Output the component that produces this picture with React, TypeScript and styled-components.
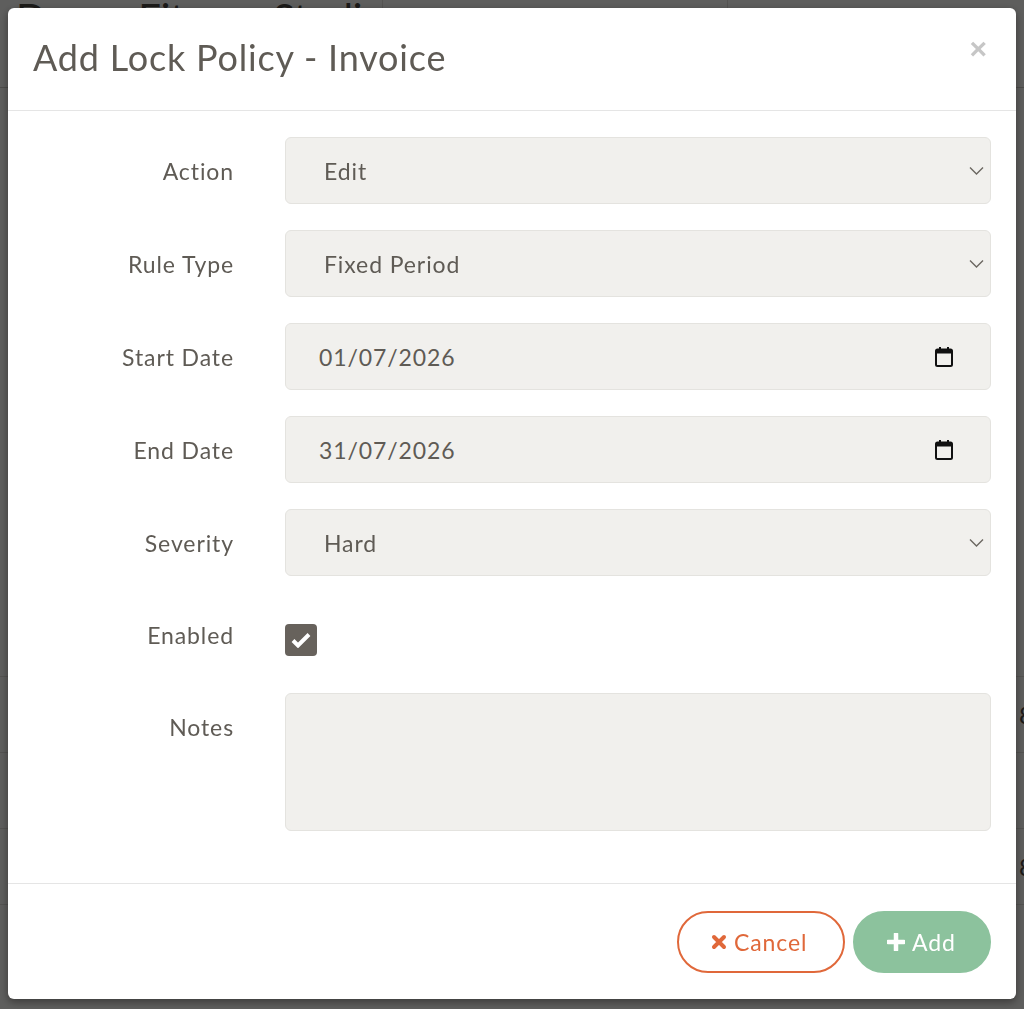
import React from "react"
import styled, { createGlobalStyle } from "styled-components"

const GlobalStyle = createGlobalStyle`
    * {
        box-sizing: border-box;
    }
    html, body {
        margin: 0;
        padding: 0;
        height: 100%;
        font-family: Lato, "Open Sans", sans-serif;
    }
`

const Page = styled.div`
    width: 100%;
    min-height: 100vh;
    background: #f7f6f3;
    overflow: hidden;
`

const TopBar = styled.div`
    height: 88px;
    display: flex;
    border-bottom: 1px solid #c9c7c2;
`

const PageTitle = styled.h1`
    margin: -6px 0 0 0;
    padding: 0 16px;
    width: 383px;
    white-space: nowrap;
    font-size: 40px;
    font-weight: 400;
    color: #4a4742;
    border-right: 1px solid #dcdad5;
`

const TopCell = styled.div`
    width: 345px;
    border-right: 1px solid #dcdad5;
`

const Table = styled.div`
    padding-top: 588px;
`

const TableRow = styled.div`
    height: 76px;
    border-top: 1px solid #dcdad5;
    display: flex;
    justify-content: flex-end;
    align-items: center;
    font-size: 24px;
    color: #4a4742;
    margin-right: -9px;
`

const Backdrop = styled.div`
    position: fixed;
    inset: 0;
    background: rgba(0, 0, 0, 0.62);
    padding: 8px;
`

const Modal = styled.div`
    background: #fff;
    border-radius: 6px;
    height: 991px;
    display: flex;
    flex-direction: column;
    box-shadow: 0 3px 9px rgba(0, 0, 0, 0.4);
`

const Header = styled.div`
    flex-shrink: 0;
    height: 103px;
    display: flex;
    align-items: center;
    justify-content: space-between;
    padding: 0 29px 0 25px;
    border-bottom: 1px solid #e5e5e5;
`

const Title = styled.h4`
    margin: 0;
    margin-top: -4px;
    font-size: 36px;
    font-weight: 400;
    letter-spacing: 0.8px;
    color: #5f5b55;
`

const Close = styled.button`
    border: 0;
    background: none;
    padding: 0;
    font-family: "Liberation Sans", Arial, sans-serif;
    font-size: 30px;
    font-weight: 700;
    line-height: 1;
    color: #c6c6c6;
    margin-top: -20px;
    cursor: pointer;
`

const Body = styled.div`
    flex: 1;
    padding: 26px 25px;
    border-bottom: 1px solid #e5e5e5;
`

const Row = styled.div`
    display: grid;
    grid-template-columns: 201px 1fr;
    column-gap: 51px;
    margin-bottom: 26px;
`

const Label = styled.label<{ $height?: number }>`
    text-align: right;
    padding-top: 2px;
    font-size: 23px;
    letter-spacing: 0.9px;
    line-height: ${p => (p.$height ?? 67) - 2}px;
    color: #5f5b55;
    align-self: start;
`

const Field = styled.div`
    position: relative;
`

const Control = styled.div<{ $inset?: number }>`
    height: 67px;
    display: flex;
    align-items: center;
    padding-left: ${p => p.$inset ?? 38}px;
    background: #f1f0ed;
    border: 1px solid #e4e3df;
    border-radius: 6px;
    font-size: 23px;
    letter-spacing: 0.9px;
    color: #5f5b55;
`

const Select = styled.select`
    appearance: none;
    width: 100%;
    height: 67px;
    padding: 0 0 0 38px;
    background: #f1f0ed;
    border: 1px solid #e4e3df;
    border-radius: 6px;
    font-family: inherit;
    font-size: 23px;
    letter-spacing: 0.9px;
    color: #5f5b55;
    outline: none;
`

const IconSlot = styled.span<{ $right: number }>`
    position: absolute;
    top: 50%;
    right: ${p => p.$right}px;
    transform: translateY(-50%);
    display: flex;
    pointer-events: none;
`

const Check = styled.span`
    margin-top: 22px;
    width: 32px;
    height: 32px;
    border-radius: 4px;
    background: #67625c;
    display: flex;
    align-items: center;
    justify-content: center;
`

const Notes = styled.textarea`
    display: block;
    width: 100%;
    height: 138px;
    resize: none;
    background: #f1f0ed;
    border: 1px solid #e4e3df;
    border-radius: 6px;
    font-family: inherit;
    font-size: 23px;
    color: #5f5b55;
    outline: none;
`

const Footer = styled.div`
    flex-shrink: 0;
    height: 115px;
    display: flex;
    justify-content: flex-end;
    align-items: center;
    gap: 8px;
    padding: 0 25px;
`

const Button = styled.button<{ $kind: "cancel" | "add" }>`
    height: 62px;
    border-radius: 31px;
    font-family: inherit;
    font-size: 23px;
    letter-spacing: 0.9px;
    display: flex;
    align-items: center;
    gap: 7px;
    cursor: pointer;
    ${p =>
        p.$kind === "cancel"
            ? `
        width: 168px;
        padding: 0 0 0 32px;
        background: #fff;
        border: 2px solid #e0683a;
        color: #e0683a;
    `
            : `
        width: 138px;
        padding: 0 0 0 32px;
        background: #8cc29d;
        border: 2px solid #8cc29d;
        color: #fff;
    `}
`

const Chevron = () => (
    <svg width="15" height="9" viewBox="0 0 15 9" fill="none">
        <path d="M1 1l6.5 6.5L14 1" stroke="#6b6761" strokeWidth="1.4" />
    </svg>
)

const Calendar = () => (
    <svg width="18" height="20" viewBox="0 0 18 20" fill="none">
        <rect x="4" y="0" width="2" height="3" fill="#111" />
        <rect x="12" y="0" width="2" height="3" fill="#111" />
        <rect x="1" y="2.5" width="16" height="16.5" rx="1.5" stroke="#111" strokeWidth="2" />
        <rect x="1" y="2.5" width="16" height="4" fill="#111" />
    </svg>
)

const rows: { label: string; kind: "select" | "date"; value: string }[] = [
    { label: "Action", kind: "select", value: "Edit" },
    { label: "Rule Type", kind: "select", value: "Fixed Period" },
    { label: "Start Date", kind: "date", value: "01/07/2026" },
    { label: "End Date", kind: "date", value: "31/07/2026" },
    { label: "Severity", kind: "select", value: "Hard" },
]

const tableValues = ["8", "", "8", ""]

const App: React.FC = () => {
    return (
        <>
            <GlobalStyle />
            <Page>
                <TopBar>
                    <PageTitle>Dance Fitness Studio</PageTitle>
                    <TopCell />
                </TopBar>
                <Table>
                    {tableValues.map((v, i) => (
                        <TableRow key={i}>{v}</TableRow>
                    ))}
                </Table>
            </Page>
            <Backdrop>
                <Modal>
                    <Header>
                        <Title>Add Lock Policy - Invoice</Title>
                        <Close>×</Close>
                    </Header>
                    <Body>
                        {rows.map(r => (
                            <Row key={r.label}>
                                <Label>{r.label}</Label>
                                <Field>
                                    {r.kind === "select" ? (
                                        <>
                                            <Select defaultValue={r.value}>
                                                <option>{r.value}</option>
                                            </Select>
                                            <IconSlot $right={7}>
                                                <Chevron />
                                            </IconSlot>
                                        </>
                                    ) : (
                                        <>
                                            <Control $inset={33}>{r.value}</Control>
                                            <IconSlot $right={38}>
                                                <Calendar />
                                            </IconSlot>
                                        </>
                                    )}
                                </Field>
                            </Row>
                        ))}
                        <Row>
                            <Label $height={65}>Enabled</Label>
                            <div>
                                <Check>
                                    <svg width="20" height="16" viewBox="0 0 20 16">
                                        <path d="M2 8.5l5 5L18 2.5" stroke="#fff" strokeWidth="4" fill="none" />
                                    </svg>
                                </Check>
                            </div>
                        </Row>
                        <Row>
                            <Label>Notes</Label>
                            <Notes />
                        </Row>
                    </Body>
                    <Footer>
                        <Button $kind="cancel">
                            <svg width="16" height="16" viewBox="0 0 16 16">
                                <path d="M3 3l10 10M13 3L3 13" stroke="#e0683a" strokeWidth="4" strokeLinecap="round" />
                            </svg>
                            Cancel
                        </Button>
                        <Button $kind="add">
                            <svg width="18" height="18" viewBox="0 0 18 18">
                                <path d="M9 1v16M1 9h16" stroke="#fff" strokeWidth="4.5" strokeLinecap="round" />
                            </svg>
                            Add
                        </Button>
                    </Footer>
                </Modal>
            </Backdrop>
        </>
    )
}

export default App
